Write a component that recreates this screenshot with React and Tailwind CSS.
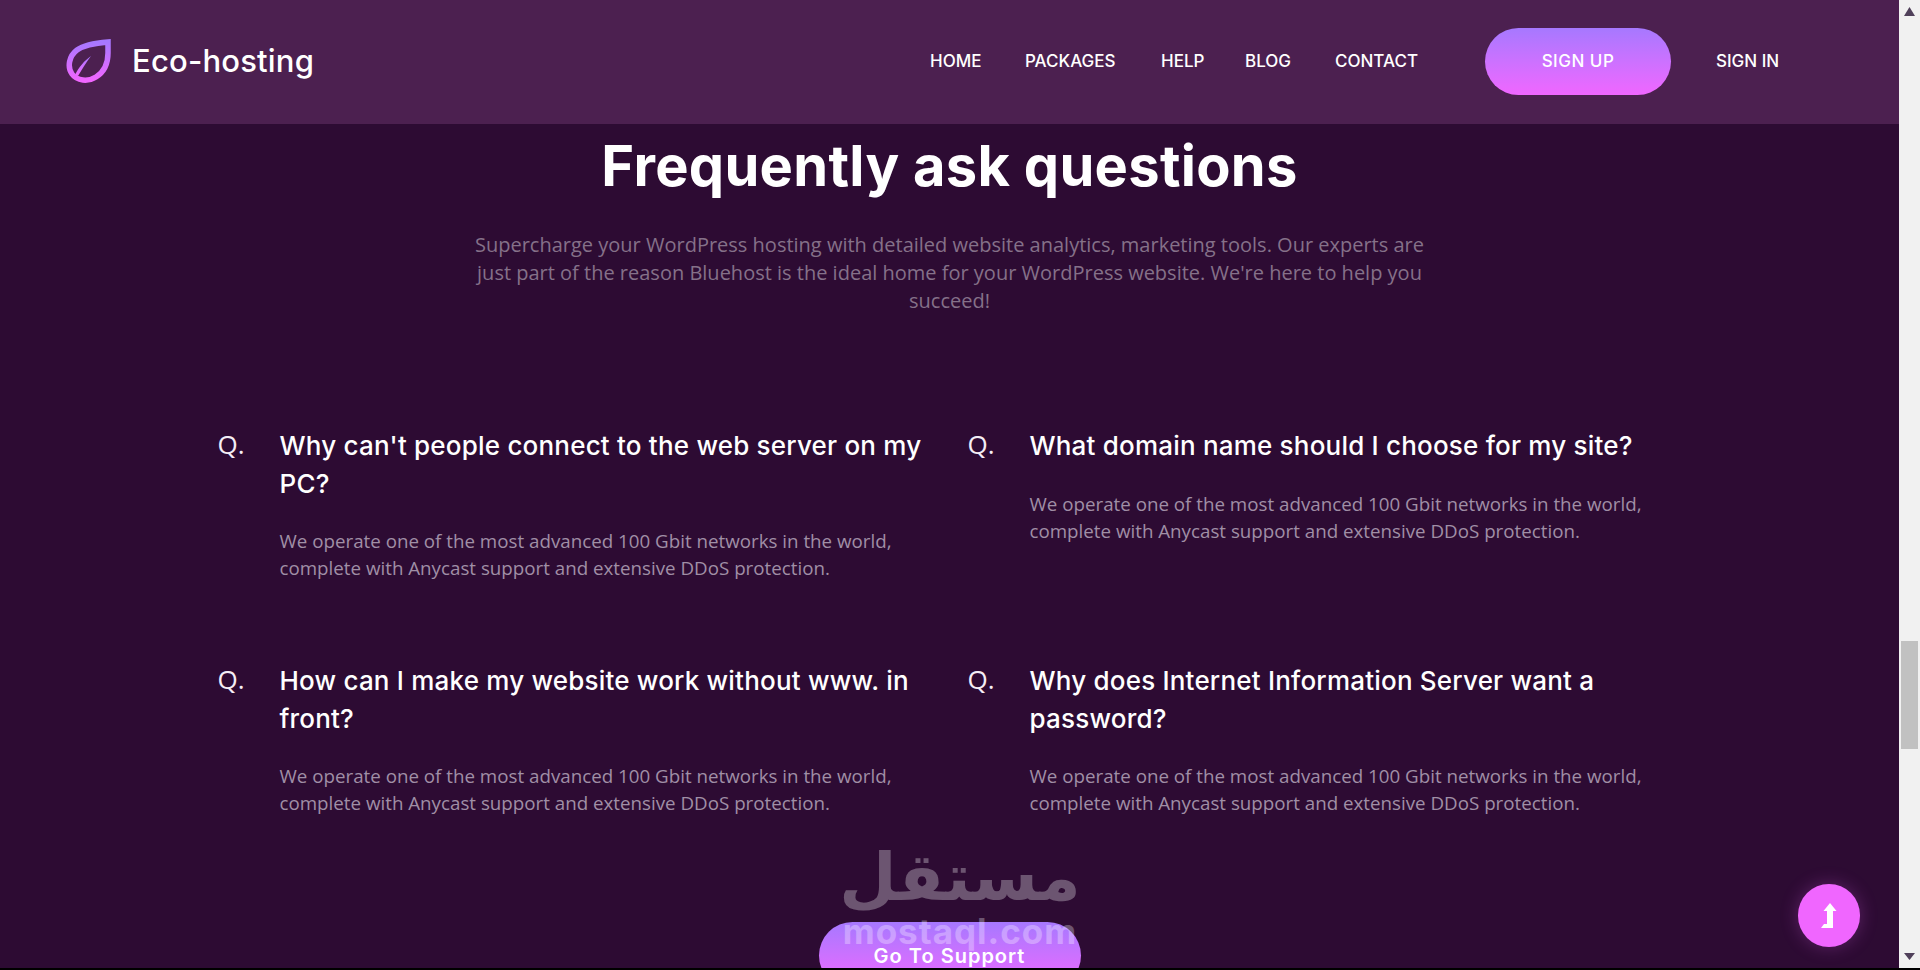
import React from "react";

const HEAD = "font-['Inter','Liberation_Sans',sans-serif]";
const BODY = "font-['Open_Sans','Liberation_Sans',sans-serif]";

const navLinks = [
  { label: "HOME", cls: "w-[95px]" },
  { label: "PACKAGES", cls: "w-[136px]" },
  { label: "HELP", cls: "w-[84px]" },
  { label: "BLOG", cls: "w-[90px]" },
  { label: "CONTACT", cls: "w-[150px]" },
];

const answer =
  "We operate one of the most advanced 100 Gbit networks in the world, complete with Anycast support and extensive DDoS protection.";

const faqs = [
  "Why can't people connect to the web server on my PC?",
  "What domain name should I choose for my site?",
  "How can I make my website work without www. in front?",
  "Why does Internet Information Server want a password?",
];

const Logo = () => (
  <svg width="45" height="45" viewBox="0 0 45 45" fill="none" className="shrink-0">
    <defs>
      <linearGradient id="leaf" x1="0" y1="0" x2="0" y2="1">
        <stop offset="0" stopColor="#a678ff" />
        <stop offset="1" stopColor="#f066ff" />
      </linearGradient>
    </defs>
    <path
      d="M42 3C30 4 18 6 11 11C3 17 1 28 6 35C11 42 22 43 30 38C38 33 42 24 42 14Z"
      stroke="url(#leaf)"
      strokeWidth="5.500"
      strokeLinejoin="miter"
    />
    <path d="M9 36C13 28 18 22 25 17C20 24 16 30 12 37Z" fill="url(#leaf)" />
  </svg>
);

const FaqItem = ({ title }) => (
  <div className="flex h-[235px] px-[18px]">
    <div className={`w-[62px] shrink-0 text-[26px] leading-[37px] text-[#f5eef6] ${BODY}`}>Q.</div>
    <div className="w-[660px] pt-px">
      <h3 className={`text-[26px] leading-[37.500px] font-medium tracking-[0.2px] text-white ${HEAD}`}>{title}</h3>
      <p className={`mt-[25px] text-[18.750px] leading-[27px] text-[#a08fa6] ${BODY}`}>{answer}</p>
    </div>
  </div>
);

const Scrollbar = () => (
  <div className="flex w-[21px] shrink-0 flex-col items-center bg-[#f1f1f1]">
    <svg className="mt-[7px]" width="11" height="9" viewBox="0 0 11 9">
      <path d="M5.500 0L11 9H0Z" fill="#50405a" />
    </svg>
    <div className="mt-[625px] h-[108px] w-[17px] bg-[#c1c1c1]" />
    <svg className="mt-[204px]" width="11" height="7" viewBox="0 0 11 7">
      <path d="M0 0H11L5.500 7Z" fill="#50405a" />
    </svg>
  </div>
);

export default function App() {
  return (
    <div className="h-[970px] overflow-hidden bg-black">
      <div className="flex h-[968px]">
        <main className="relative flex-1 overflow-hidden bg-[#2d0b33]">
          <header className="flex h-[124px] items-center bg-[#4c2050] pr-[121px] pb-[2px] pl-[66px]">
            <Logo />
            <span className={`ml-[21px] text-[31px] font-medium tracking-[0.2px] text-white ${HEAD}`}>Eco-hosting</span>
            <nav className={`ml-auto flex items-center pt-[2px] text-[17px] font-medium text-white ${HEAD}`}>
              {navLinks.map((l) => (
                <a key={l.label} className={l.cls}>{l.label}</a>
              ))}
            </nav>
            <button className={`h-[67px] w-[186px] rounded-full bg-linear-to-b from-[#a678ff] to-[#f066ff] pt-[2px] text-[17px] font-medium tracking-[0.5px] text-white ${HEAD}`}>
              SIGN UP
            </button>
            <a className={`ml-[45px] w-[62px] pt-[2px] text-[17px] font-medium whitespace-nowrap text-white ${HEAD}`}>SIGN IN</a>
          </header>

          <h1 className={`text-center text-[56px] leading-[84px] font-bold tracking-[0.3px] text-white ${HEAD}`}>
            Frequently ask questions
          </h1>
          <p className={`mx-auto mt-[23px] w-[960px] text-center text-[20px] leading-[28px] text-[#857189] ${BODY}`}>
            Supercharge your WordPress hosting with detailed website analytics, marketing tools. Our experts are just part of the reason Bluehost is the ideal home for your WordPress website. We're here to help you succeed!
          </p>

          <div className="mx-auto mt-[111px] grid w-[1500px] grid-cols-2">
            {faqs.map((q) => (
              <FaqItem key={q} title={q} />
            ))}
          </div>

          <div className="mt-[26px] flex justify-center">
            <button className={`h-[67px] w-[262px] rounded-full bg-linear-to-b from-[#a678ff] to-[#f066ff] text-[20px] font-semibold tracking-[1px] text-white ${HEAD}`}>
              Go To Support
            </button>
          </div>

          {/* mostaql watermark */}
          <div className="pointer-events-none absolute top-[843px] left-[845px] flex w-[230px] flex-col items-center text-white opacity-30">
            <span className="text-[66px] leading-[70px] font-bold font-['DejaVu_Sans',sans-serif]">مستقل</span>
            <span className="text-[35px] leading-[37px] font-bold tracking-[1px] font-['Inter',sans-serif]">mostaql.com</span>
          </div>

          <button className="absolute top-[884px] left-[1798px] flex h-[63px] w-[62px] items-center justify-center rounded-full bg-[#f066ff] shadow-[0_0_18px_rgba(240,102,255,0.25)]">
            <svg width="18" height="26" viewBox="0 0 18 26">
              <path d="M10 0L16.500 8H13V25H1L4 21H7V8H3.500Z" fill="#fff" />
            </svg>
          </button>
        </main>
        <Scrollbar />
      </div>
    </div>
  );
}
